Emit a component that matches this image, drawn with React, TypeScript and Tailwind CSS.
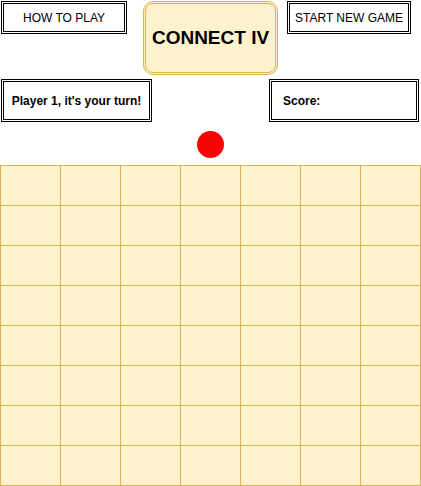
import React from "react";

export default function App() {
  const rows = Array.from({ length: 8 });
  const cols = Array.from({ length: 7 });
  return (
    <div className="w-[421px] bg-white text-black font-['Liberation_Sans',Arial,sans-serif]">
      <div className="flex items-start h-[79px] pt-px pl-px">
        <div className="w-[126px] h-[33px] border-[3px] border-double border-black flex items-center justify-center text-[12px]">
          HOW TO PLAY
        </div>
        <div className="ml-[16px] w-[135px] h-[74px] rounded-[10px] border-[3px] border-double border-[#d6b656] bg-[#fff2cc] flex items-center justify-center text-[19px] font-bold">
          CONNECT IV
        </div>
        <div className="ml-[9px] w-[124px] h-[33px] border-[3px] border-double border-black flex items-center justify-center text-[12px]">
          START NEW GAME
        </div>
      </div>
      <div className="flex justify-between h-[43px] pl-px pr-[2px]">
        <div className="w-[151px] h-[43px] border-[3px] border-double border-black flex items-center justify-center text-[12px] font-bold">
          Player 1, it's your turn!
        </div>
        <div className="w-[150px] h-[43px] border-[3px] border-double border-black flex items-center pl-[11px] text-[12px] font-bold">
          Score:
        </div>
      </div>
      <div className="h-[43px] flex justify-center pt-[9px]">
        <div className="w-[27px] h-[27px] rounded-full bg-[#ff0000]" />
      </div>
      <div className="border-l border-t border-[#d6b656] bg-[#fff2cc] w-[421px]">
        {rows.map((_, r) => (
          <div key={r} className="flex">
            {cols.map((_, c) => (
              <div key={c} className="w-[60px] h-[40px] border-r border-b border-[#d6b656]" />
            ))}
          </div>
        ))}
      </div>
    </div>
  );
}
